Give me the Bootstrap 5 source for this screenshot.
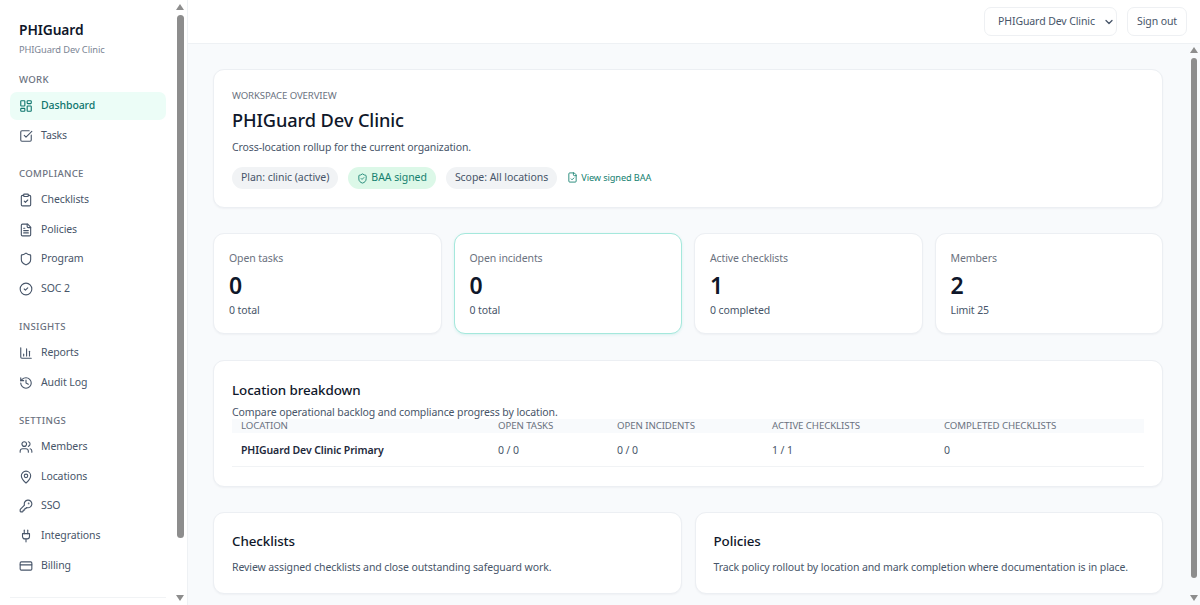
<!DOCTYPE html>
<html lang="en">
  <head>
    <meta charset="UTF-8" />
    <meta name="viewport" content="width=device-width, initial-scale=1.0" />
    <title>PHIGuard</title>
    <link href="https://cdn.jsdelivr.net/npm/bootstrap@5.3.0/dist/css/bootstrap.min.css" rel="stylesheet" />
    <script src="https://cdn.jsdelivr.net/npm/bootstrap@5.3.0/dist/js/bootstrap.bundle.min.js"></script>
    <style>
      html, body { height: 100%; overflow: hidden; }
      body { font-family: "Noto Sans", "Open Sans", sans-serif; color: #0f172a; background: #f8fafc; font-size: 10.5px; letter-spacing: -.1px; }
      svg.ico { width: 14px; height: 14px; fill: none; stroke: currentColor; stroke-width: 1.9; stroke-linecap: round; stroke-linejoin: round; flex: none; }

      .shell { height: 605px; }
      .side { position: relative; width: 188px; flex: none; background: #fff; border-right: 1px solid #eef1f4; overflow: hidden; padding: 21px 21px 0 10px; }
      .brand { padding-left: 9px; font-size: 13.8px; font-weight: 600; line-height: 18px; color: #0f172a; }
      .brand-sub { padding-left: 9px; font-size: 9.3px; color: #7b8494; line-height: 13px; margin-top: 4px; }
      .nav-head { padding-left: 9px; font-size: 9.6px; font-weight: 500; letter-spacing: .3px; color: #6b7280; line-height: 14px; margin-bottom: 5px; }
      .nav-item-x { display: flex; align-items: center; gap: 8px; height: 28px; padding-left: 9px; margin-bottom: 1.6px; color: #475569; font-size: 10.5px; text-decoration: none; border-radius: 7px; }
      .nav-item-x.on { background: #ecfdf7; color: #0f766e; font-weight: 500; }
      .nav-first { margin-top: 17px; }
      .nav-group { margin-bottom: 17.4px; }
      .side-foot { border-top: 1px solid #f1f3f5; margin-top: 17px; }

      .sbar { position: absolute; top: 0; bottom: 0; width: 12px; }
      .sbar-thumb { position: absolute; left: 2px; width: 7px; background: #8d8d8d; border-radius: 4px; }
      .sbar-up, .sbar-down { position: absolute; left: 1px; width: 0; height: 0; border-left: 4.5px solid transparent; border-right: 4.5px solid transparent; }
      .sbar-up { border-bottom: 6px solid #8d8d8d; }
      .sbar-down { border-top: 6px solid #8d8d8d; }
      .side .sbar { right: 0; }
      .side .sbar-thumb { top: 15px; bottom: 67px; }
      .side .sbar-up { top: 4px; }
      .side .sbar-down { bottom: 4px; }
      .main-x .sbar { right: 0; top: 44px; background: #f8fafc; }
      .main-x .sbar-thumb { left: 3px; width: 6px; top: 14px; bottom: 27px; }
      .main-x .sbar-up { left: 2px; top: 3px; }
      .main-x .sbar-down { left: 2px; bottom: 4px; }

      .main-x { position: relative; min-width: 0; }
      .topbar { height: 44px; flex: none; background: #fff; border-bottom: 1px solid #eef1f4; padding: 0 13px 0 0; gap: 10px; }
      .org-select { width: 133px; height: 29px; font-size: 10.5px; letter-spacing: -.1px; color: #475569; border: 1px solid #eef0f3; border-radius: 7px; padding: 0 18px 0 13px; background-image: url("data:image/svg+xml,%3csvg xmlns='http://www.w3.org/2000/svg' viewBox='0 0 16 16'%3e%3cpath fill='none' stroke='%23475569' stroke-linecap='round' stroke-linejoin='round' stroke-width='2.6' d='m2 5 6 6 6-6'/%3e%3c/svg%3e"); background-position: right 3px center; background-size: 8px 8px; font-family: inherit; }
      .sign-btn { height: 29px; width: 60px; font-size: 10.5px; letter-spacing: -.1px; color: #475569; border: 1px solid #eef0f3; border-radius: 7px; padding: 0; background: #fff; }
      .content-x { overflow: hidden; padding: 25px 37px 0 25px; }

      .panel { background: #fff; border: 1px solid #eceff3; border-radius: 11px; box-shadow: 0 1px 2px rgba(15, 23, 42, .04); }
      .hero { height: 139px; padding: 19px 18px; margin-bottom: 25px; }
      .eyebrow { font-size: 9.6px; color: #6b7280; line-height: 13px; }
      .hero h1 { font-size: 18.2px; font-weight: 500; line-height: 26px; margin: 5px 0 7px; color: #0f172a; letter-spacing: -.1px; }
      .hero p { font-size: 10.5px; color: #475569; line-height: 14px; margin: 0 0 13px; }
      .pill-x { display: inline-flex; align-items: center; gap: 3px; height: 22px; padding: 0 9px; border-radius: 11px; background: #f1f3f5; color: #475569; font-size: 10.5px; letter-spacing: -.05px; }
      .pill-x.ok { background: #dcf8e8; color: #14806f; }
      .pill-x svg { width: 11px; height: 11px; }
      .baa-link { display: inline-flex; align-items: center; gap: 3px; font-size: 9.2px; color: #14806f; text-decoration: none; }
      .baa-link svg { width: 11px; height: 11px; }
      .hero-tags { gap: 10px; }

      .stat-row { display: grid; grid-template-columns: repeat(4, 1fr); gap: 12px; margin-bottom: 26px; }
      .stat { height: 101px; padding: 16px 15px; }
      .stat.hot { border-color: #a5e8dc; box-shadow: 0 1px 3px rgba(20, 184, 166, .14); }
      .stat-label { font-size: 10.5px; color: #6b7280; line-height: 16px; }
      .stat-num { font-size: 23px; font-weight: 600; line-height: 32px; margin-top: 3px; color: #0f172a; letter-spacing: 0; }
      .stat-sub { font-size: 10.5px; color: #475569; line-height: 15px; margin-top: 2px; }

      .break { height: 127px; padding: 20px 18px 0; margin-bottom: 25px; }
      .break h2, .pair h2 { font-size: 13.4px; font-weight: 500; line-height: 19px; margin: 0; color: #0f172a; }
      .break p { font-size: 10.5px; color: #475569; line-height: 13px; margin: 5.5px 0 0; }
      .pair p { font-size: 10.5px; color: #475569; line-height: 15px; margin: 8.5px 0 0; }
      .loc-table { width: 100%; font-size: 10.5px; table-layout: fixed; margin: 0; }
      .loc-table th { background: #f8fafc; font-size: 9.7px; font-weight: 400; color: #6b7280; height: 14px; line-height: 13px; padding: 0 9px; }
      .loc-table td { height: 34px; padding: 3px 9px 0; color: #475569; border-bottom: 1px solid #f1f3f5; }
      .loc-table td:first-child { font-weight: 600; color: #1e293b; }

      .pair-row { display: grid; grid-template-columns: 1fr 1fr; gap: 13px; }
      .pair { height: 82px; padding: 19px 18px; }
    </style>
  </head>
  <body>
    <div class="shell d-flex">
      <aside class="side">
        <div class="brand">PHIGuard</div>
        <div class="brand-sub">PHIGuard Dev Clinic</div>

        <div class="nav-group nav-first">
          <div class="nav-head">WORK</div>
          <a class="nav-item-x on" href="#"><svg class="ico" viewBox="0 0 24 24"><rect x="3" y="3" width="7" height="9" rx="1"/><rect x="14" y="3" width="7" height="5" rx="1"/><rect x="14" y="12" width="7" height="9" rx="1"/><rect x="3" y="16" width="7" height="5" rx="1"/></svg>Dashboard</a>
          <a class="nav-item-x" href="#"><svg class="ico" viewBox="0 0 24 24"><path d="M21 10.5V19a2 2 0 0 1-2 2H5a2 2 0 0 1-2-2V5a2 2 0 0 1 2-2h12.5"/><path d="m9 11 3 3L22 4"/></svg>Tasks</a>
        </div>

        <div class="nav-group">
          <div class="nav-head">COMPLIANCE</div>
          <a class="nav-item-x" href="#"><svg class="ico" viewBox="0 0 24 24"><rect x="8" y="2" width="8" height="4" rx="1"/><path d="M16 4h2a2 2 0 0 1 2 2v14a2 2 0 0 1-2 2H6a2 2 0 0 1-2-2V6a2 2 0 0 1 2-2h2"/><path d="m9 14 2 2 4-4"/></svg>Checklists</a>
          <a class="nav-item-x" href="#"><svg class="ico" viewBox="0 0 24 24"><path d="M15 2H6a2 2 0 0 0-2 2v16a2 2 0 0 0 2 2h12a2 2 0 0 0 2-2V7Z"/><path d="M14 2v4a2 2 0 0 0 2 2h4"/><path d="M16 13H8"/><path d="M16 17H8"/><path d="M10 9H8"/></svg>Policies</a>
          <a class="nav-item-x" href="#"><svg class="ico" viewBox="0 0 24 24"><path d="M20 13c0 5-3.5 7.5-7.66 8.95a1 1 0 0 1-.67-.01C7.5 20.5 4 18 4 13V6a1 1 0 0 1 1-1c2 0 4.5-1.2 6.24-2.72a1.17 1.17 0 0 1 1.52 0C14.51 3.81 17 5 19 5a1 1 0 0 1 1 1z"/></svg>Program</a>
          <a class="nav-item-x" href="#"><svg class="ico" viewBox="0 0 24 24"><circle cx="12" cy="12" r="10"/><path d="m9 12 2 2 4-4"/></svg>SOC 2</a>
        </div>

        <div class="nav-group">
          <div class="nav-head">INSIGHTS</div>
          <a class="nav-item-x" href="#"><svg class="ico" viewBox="0 0 24 24"><path d="M3 3v16a2 2 0 0 0 2 2h16"/><path d="M18 17V9"/><path d="M13 17V5"/><path d="M8 17v-3"/></svg>Reports</a>
          <a class="nav-item-x" href="#"><svg class="ico" viewBox="0 0 24 24"><path d="M3 12a9 9 0 1 0 9-9 9.75 9.75 0 0 0-6.74 2.74L3 8"/><path d="M3 3v5h5"/><path d="M12 7v5l4 2"/></svg>Audit Log</a>
        </div>

        <div>
          <div class="nav-head">SETTINGS</div>
          <a class="nav-item-x" href="#"><svg class="ico" viewBox="0 0 24 24"><path d="M16 21v-2a4 4 0 0 0-4-4H6a4 4 0 0 0-4 4v2"/><circle cx="9" cy="7" r="4"/><path d="M22 21v-2a4 4 0 0 0-3-3.87"/><path d="M16 3.13a4 4 0 0 1 0 7.75"/></svg>Members</a>
          <a class="nav-item-x" href="#"><svg class="ico" viewBox="0 0 24 24"><path d="M20 10c0 5-5.5 10.2-7.4 11.8a1 1 0 0 1-1.2 0C9.5 20.2 4 15 4 10a8 8 0 0 1 16 0"/><circle cx="12" cy="10" r="3"/></svg>Locations</a>
          <a class="nav-item-x" href="#"><svg class="ico" viewBox="0 0 24 24"><path d="M2.59 17.41A2 2 0 0 0 2 18.83V21a1 1 0 0 0 1 1h3a1 1 0 0 0 1-1v-1a1 1 0 0 1 1-1h1a1 1 0 0 0 1-1v-1a1 1 0 0 1 1-1h.17a2 2 0 0 0 1.42-.59l.81-.81a6.5 6.5 0 1 0-4-4z"/><circle cx="16.5" cy="7.5" r=".5" fill="currentColor"/></svg>SSO</a>
          <a class="nav-item-x" href="#"><svg class="ico" viewBox="0 0 24 24"><path d="M12 22v-5"/><path d="M9 8V2"/><path d="M15 8V2"/><path d="M18 8v5a4 4 0 0 1-4 4h-4a4 4 0 0 1-4-4V8Z"/></svg>Integrations</a>
          <a class="nav-item-x" href="#"><svg class="ico" viewBox="0 0 24 24"><rect x="2" y="5" width="20" height="14" rx="2"/><path d="M2 10h20"/></svg>Billing</a>
        </div>
        <div class="side-foot"></div>

        <div class="sbar"><div class="sbar-up"></div><div class="sbar-thumb"></div><div class="sbar-down"></div></div>
      </aside>

      <div class="main-x d-flex flex-column flex-grow-1">
        <header class="topbar d-flex align-items-center justify-content-end">
          <select class="form-select org-select"><option>PHIGuard Dev Clinic</option></select>
          <button class="btn sign-btn">Sign out</button>
        </header>

        <main class="content-x flex-grow-1">
          <section class="panel hero">
            <div class="eyebrow">WORKSPACE OVERVIEW</div>
            <h1>PHIGuard Dev Clinic</h1>
            <p>Cross-location rollup for the current organization.</p>
            <div class="d-flex align-items-center hero-tags">
              <span class="pill-x">Plan: clinic (active)</span>
              <span class="pill-x ok"><svg class="ico" viewBox="0 0 24 24"><path d="M20 13c0 5-3.5 7.5-7.66 8.95a1 1 0 0 1-.67-.01C7.5 20.5 4 18 4 13V6a1 1 0 0 1 1-1c2 0 4.5-1.2 6.24-2.72a1.17 1.17 0 0 1 1.52 0C14.51 3.81 17 5 19 5a1 1 0 0 1 1 1z"/><path d="m9 12 2 2 4-4"/></svg>BAA signed</span>
              <span class="pill-x">Scope: All locations</span>
              <a class="baa-link" href="#"><svg class="ico" viewBox="0 0 24 24"><path d="M15 2H6a2 2 0 0 0-2 2v16a2 2 0 0 0 2 2h12a2 2 0 0 0 2-2V7Z"/><path d="M14 2v4a2 2 0 0 0 2 2h4"/><path d="m9 15 2 2 4-4"/></svg>View signed BAA</a>
            </div>
          </section>

          <section class="stat-row">
            <div class="panel stat"><div class="stat-label">Open tasks</div><div class="stat-num">0</div><div class="stat-sub">0 total</div></div>
            <div class="panel stat hot"><div class="stat-label">Open incidents</div><div class="stat-num">0</div><div class="stat-sub">0 total</div></div>
            <div class="panel stat"><div class="stat-label">Active checklists</div><div class="stat-num">1</div><div class="stat-sub">0 completed</div></div>
            <div class="panel stat"><div class="stat-label">Members</div><div class="stat-num">2</div><div class="stat-sub">Limit 25</div></div>
          </section>

          <section class="panel break">
            <h2>Location breakdown</h2>
            <p>Compare operational backlog and compliance progress by location.</p>
            <table class="loc-table">
              <colgroup><col style="width:257px"><col style="width:119px"><col style="width:155px"><col style="width:172px"><col></colgroup>
              <thead><tr><th>LOCATION</th><th>OPEN TASKS</th><th>OPEN INCIDENTS</th><th>ACTIVE CHECKLISTS</th><th>COMPLETED CHECKLISTS</th></tr></thead>
              <tbody><tr><td>PHIGuard Dev Clinic Primary</td><td>0 / 0</td><td>0 / 0</td><td>1 / 1</td><td>0</td></tr></tbody>
            </table>
          </section>

          <section class="pair-row">
            <div class="panel pair"><h2>Checklists</h2><p>Review assigned checklists and close outstanding safeguard work.</p></div>
            <div class="panel pair"><h2>Policies</h2><p>Track policy rollout by location and mark completion where documentation is in place.</p></div>
          </section>
        </main>

        <div class="sbar"><div class="sbar-up"></div><div class="sbar-thumb"></div><div class="sbar-down"></div></div>
      </div>
    </div>
  </body>
</html>
